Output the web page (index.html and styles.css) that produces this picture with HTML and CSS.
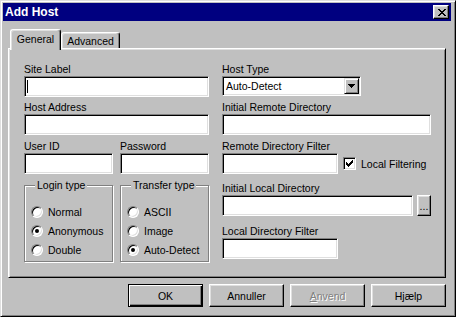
FILE: index.html
```html
<!DOCTYPE html>
<html lang="da">
<head>
  <meta charset="UTF-8">
  <title>Add Host</title>
  <link rel="stylesheet" href="styles.css">
</head>
<body>
  <div class="window">
    <div class="titlebar">
      <span class="title">Add Host</span>
      <span class="close-btn">
        <svg width="8" height="7" viewBox="0 0 8 7" shape-rendering="crispEdges"><path fill="#000" d="M0 0h2v1h-2z M6 0h2v1h-2z M1 1h2v1h-2z M5 1h2v1h-2z M2 2h4v1h-4z M3 3h2v1h-2z M2 4h4v1h-4z M1 5h2v1h-2z M5 5h2v1h-2z M0 6h2v1h-2z M6 6h2v1h-2z"/></svg>
      </span>
    </div>

    <div class="tabs">
      <div class="tab tab-active">General</div>
      <div class="tab tab-back">Advanced</div>
    </div>

    <div class="panel">
      <div class="col col-left">
        <div class="field">
          <div class="lbl">Site Label</div>
          <div class="edit"><span class="caret"></span></div>
        </div>
        <div class="field field-second">
          <div class="lbl">Host Address</div>
          <div class="edit"></div>
        </div>
        <div class="pair">
          <div class="field field-half">
            <div class="lbl">User ID</div>
            <div class="edit"></div>
          </div>
          <div class="field field-half">
            <div class="lbl">Password</div>
            <div class="edit"></div>
          </div>
        </div>
        <div class="groups">
          <div class="group">
            <div class="legend">Login type</div>
            <div class="radio-row"><span class="radio"></span>Normal</div>
            <div class="radio-row"><span class="radio checked"></span>Anonymous</div>
            <div class="radio-row"><span class="radio"></span>Double</div>
          </div>
          <div class="group">
            <div class="legend">Transfer type</div>
            <div class="radio-row"><span class="radio"></span>ASCII</div>
            <div class="radio-row"><span class="radio"></span>Image</div>
            <div class="radio-row"><span class="radio checked"></span>Auto-Detect</div>
          </div>
        </div>
      </div>

      <div class="col col-right">
        <div class="field">
          <div class="lbl">Host Type</div>
          <div class="combo">
            <span class="combo-text">Auto-Detect</span>
            <span class="drop-btn">
              <svg width="7" height="4" viewBox="0 0 7 4" shape-rendering="crispEdges"><path fill="#000" d="M0 0h7v1h-7z M1 1h5v1h-5z M2 2h3v1h-3z M3 3h1v1h-1z"/></svg>
            </span>
          </div>
        </div>
        <div class="field field-second">
          <div class="lbl">Initial Remote Directory</div>
          <div class="edit"></div>
        </div>
        <div class="field field-third">
          <div class="lbl">Remote Directory Filter</div>
          <div class="inline">
            <div class="edit edit-short"></div>
            <span class="checkbox">
              <svg width="7" height="7" viewBox="0 0 7 7" shape-rendering="crispEdges"><path fill="#000" d="M6 0h1v1h-1z M5 1h2v1h-2z M0 2h1v1h-1z M4 2h3v1h-3z M0 3h2v1h-2z M3 3h3v1h-3z M0 4h5v1h-5z M1 5h3v1h-3z M2 6h1v1h-1z"/></svg>
            </span>
            <span class="check-label">Local Filtering</span>
          </div>
        </div>
        <div class="field field-local">
          <div class="lbl">Initial Local Directory</div>
          <div class="inline">
            <div class="edit edit-browse"></div>
            <span class="browse-btn">...</span>
          </div>
        </div>
        <div class="field field-filter">
          <div class="lbl">Local Directory Filter</div>
          <div class="edit edit-short"></div>
        </div>
      </div>
    </div>

    <div class="buttons">
      <div class="btn btn-default">OK</div>
      <div class="btn">Annuller</div>
      <div class="btn btn-disabled"><u>A</u>nvend</div>
      <div class="btn">Hjælp</div>
    </div>
  </div>
</body>
</html>
```

FILE: styles.css
```css
* {
  box-sizing: border-box;
}
body {
  margin: 0;
  font-family: "Liberation Sans", Arial, sans-serif;
  font-size: 10.5px;
  color: #000;
  background: #c0c0c0;
}
.window {
  width: 456px;
  height: 317px;
  background: #c0c0c0;
  border: 1px solid;
  border-color: #dfdfdf #000 #000 #dfdfdf;
  box-shadow: inset 1px 1px #fff, inset -1px -1px #808080;
  padding: 2px;
  display: flex;
  flex-direction: column;
}
.titlebar {
  height: 18px;
  margin-right: 2px;
  background: #000080;
  color: #fff;
  display: flex;
  align-items: center;
  justify-content: space-between;
  padding: 0 2px;
}
.title {
  font-weight: bold;
  font-size: 12px;
}
.close-btn {
  width: 16px;
  height: 14px;
  background: #c0c0c0;
  border: 1px solid;
  border-color: #fff #000 #000 #fff;
  box-shadow: inset -1px -1px #808080, inset 1px 1px #dfdfdf;
  display: flex;
  align-items: center;
  justify-content: center;
  padding-left: 1px;
}
.close-btn svg {
  display: block;
}

/* tabs */
.tabs {
  margin: 8px 0 0 7px;
  height: 19px;
  display: flex;
  align-items: flex-end;
}
.tab {
  display: flex;
  align-items: center;
  justify-content: center;
  border: 1px solid;
  border-color: #fff #000 transparent #fff;
  border-bottom: none;
  border-radius: 3px 3px 0 0;
  box-shadow: inset -1px 0 #808080, inset 1px 1px #dfdfdf;
  background: #c0c0c0;
}
.tab-active {
  position: relative;
  z-index: 1;
  width: 51px;
  height: 21px;
  margin-bottom: -2px;
  padding-bottom: 3px;
}
.tab-back {
  width: 59px;
  height: 16px;
}

/* panel */
.panel {
  margin: 0 7px 0 5px;
  height: 230px;
  border: 1px solid;
  border-color: #fff #000 #000 #fff;
  box-shadow: inset 1px 1px #dfdfdf, inset -1px -1px #808080;
  padding: 13px 0 0 15px;
  display: flex;
  gap: 13px;
}
.col {
  display: flex;
  flex-direction: column;
}
.col-left {
  width: 185px;
}
.col-right {
  width: 209px;
}
.field {
  height: 35px;
}
.field-second {
  margin-top: 3px;
}
.field-third {
  margin-top: 4px;
}
.field-local {
  margin-top: 7px;
}
.field-filter {
  margin-top: 8px;
}
.lbl {
  line-height: 14px;
  height: 14px;
  white-space: nowrap;
}
.edit {
  height: 21px;
  background: #fff;
  border: 1px solid;
  border-color: #808080 #fff #fff #808080;
  box-shadow: inset 1px 1px #000, inset -1px -1px #dfdfdf;
  display: flex;
  align-items: center;
}
.caret {
  width: 1px;
  height: 13px;
  margin-left: 2px;
  background: #000;
}
.pair {
  margin-top: 4px;
  display: flex;
  gap: 7px;
}
.field-half {
  width: 89px;
}

/* group boxes */
.groups {
  margin-top: 11px;
  display: flex;
  gap: 7px;
}
.group {
  width: 89px;
  height: 77px;
  border: 1px solid #808080;
  box-shadow: inset 1px 1px #fff, 1px 1px #fff;
  display: flex;
  flex-direction: column;
}
.legend {
  align-self: flex-start;
  margin: -8px 0 10px 10px;
  padding: 0 2px;
  line-height: 14px;
  background: #c0c0c0;
  white-space: nowrap;
}
.radio-row {
  height: 19px;
  display: flex;
  align-items: center;
  padding-left: 6px;
  white-space: nowrap;
}
.radio {
  width: 12px;
  height: 12px;
  margin-right: 5px;
  border-radius: 50%;
  background: #fff;
  border: 1px solid;
  border-color: #808080 #fff #fff #808080;
  box-shadow: inset 1px 1px #000, inset -1px -1px #dfdfdf;
  display: flex;
  align-items: center;
  justify-content: center;
}
.radio.checked::after {
  content: "";
  width: 4px;
  height: 4px;
  border-radius: 50%;
  background: #000;
}

/* right column controls */
.combo {
  width: 139px;
  height: 20px;
  background: #fff;
  border: 1px solid;
  border-color: #808080 #fff #fff #808080;
  box-shadow: inset 1px 1px #000, inset -1px -1px #dfdfdf;
  display: flex;
  align-items: center;
  justify-content: space-between;
  padding: 2px 1px 2px 3px;
}
.drop-btn {
  width: 15px;
  height: 16px;
  background: #c0c0c0;
  border: 1px solid;
  border-color: #dfdfdf #000 #000 #dfdfdf;
  box-shadow: inset 1px 1px #fff, inset -1px -1px #808080;
  display: flex;
  align-items: center;
  justify-content: center;
}
.drop-btn svg {
  display: block;
}
.inline {
  display: flex;
  align-items: center;
}
.edit-short {
  width: 116px;
}
.edit-browse {
  width: 191px;
}
.checkbox {
  width: 13px;
  height: 13px;
  margin-left: 5px;
  background: #fff;
  border: 1px solid;
  border-color: #808080 #fff #fff #808080;
  box-shadow: inset 1px 1px #000, inset -1px -1px #dfdfdf;
  display: flex;
  align-items: center;
  justify-content: center;
}
.checkbox svg {
  display: block;
}
.check-label {
  margin-left: 5px;
  white-space: nowrap;
}
.browse-btn {
  width: 14px;
  height: 21px;
  margin-left: 4px;
  border: 1px solid;
  border-color: #fff #000 #000 #fff;
  box-shadow: inset -1px -1px #808080, inset 1px 1px #dfdfdf;
  display: flex;
  align-items: flex-end;
  justify-content: center;
  line-height: 14px;
  padding-bottom: 2px;
}

/* bottom buttons */
.buttons {
  margin: 6px 7px 0 0;
  display: flex;
  justify-content: flex-end;
  gap: 6px;
}
.btn {
  width: 75px;
  height: 23px;
  border: 1px solid;
  border-color: #fff #000 #000 #fff;
  box-shadow: inset -1px -1px #808080, inset 1px 1px #dfdfdf;
  display: flex;
  align-items: center;
  justify-content: center;
}
.btn-default {
  border-color: #000;
  box-shadow: inset 1px 1px #fff, inset -1px -1px #000, inset -2px -2px #808080;
}
.btn-disabled {
  color: #808080;
  text-shadow: 1px 1px #fff;
}
```
